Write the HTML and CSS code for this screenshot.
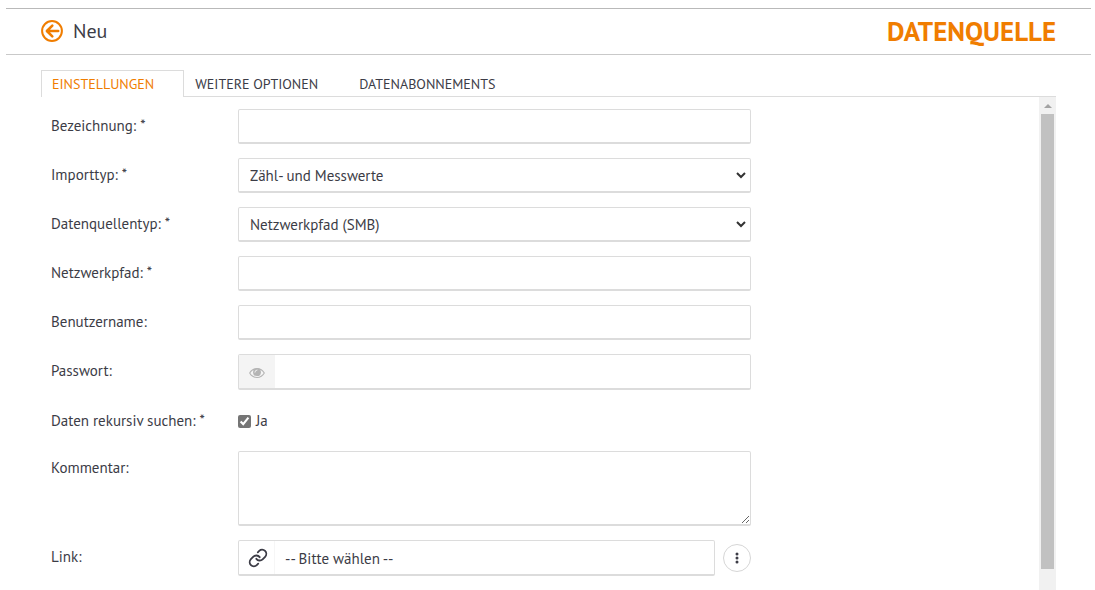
FILE: index.html
```html
<!DOCTYPE html>
<html lang="de">
<head>
  <meta charset="UTF-8">
  <meta name="viewport" content="width=device-width, initial-scale=1.0">
  <title>Datenquelle</title>
  <link rel="stylesheet" href="styles.css">
</head>
<body>
  <header class="header">
    <a class="back" href="#" aria-label="Zurück">
      <svg width="22" height="22" viewBox="0 0 22 22" fill="none" stroke="currentColor">
        <circle cx="11" cy="11" r="9.9" stroke-width="2"/>
        <path d="M17.2 11H6.5M11.3 5.6L5.9 11l5.4 5.4" stroke-width="2.6" stroke-linecap="round" stroke-linejoin="round"/>
      </svg>
    </a>
    <span class="subtitle">Neu</span>
    <h1>DATENQUELLE</h1>
  </header>

  <main class="content">
    <nav class="tabs">
      <a class="tab active" href="#">EINSTELLUNGEN</a>
      <a class="tab" href="#">WEITERE OPTIONEN</a>
      <a class="tab" href="#">DATENABONNEMENTS</a>
    </nav>

    <div class="panel">
      <form class="form">
        <div class="row">
          <label for="name">Bezeichnung: *</label>
          <input class="field" type="text" id="name">
        </div>
        <div class="row">
          <label for="import_type">Importtyp: *</label>
          <select class="field arrow" id="import_type">
            <option>Zähl- und Messwerte</option>
          </select>
        </div>
        <div class="row">
          <label for="source_type">Datenquellentyp: *</label>
          <select class="field arrow" id="source_type">
            <option>Netzwerkpfad (SMB)</option>
          </select>
        </div>
        <div class="row">
          <label for="path">Netzwerkpfad: *</label>
          <input class="field" type="text" id="path">
        </div>
        <div class="row">
          <label for="user">Benutzername:</label>
          <input class="field" type="text" id="user">
        </div>
        <div class="row">
          <label for="password">Passwort:</label>
          <div class="group">
            <button class="addon eye" type="button" aria-label="Passwort anzeigen">
              <svg width="16" height="12" viewBox="0 0 16 12">
                <path d="M.7 6C4 .1 12 .1 15.3 6 12 11.900 4 11.900.7 6z" fill="none" stroke="currentColor" stroke-width="1.100"/>
                <circle cx="8" cy="5.200" r="3.900" fill="currentColor"/>
                <path d="M5.900 5.200A2.200 2.200 0 0 1 8 3" fill="none" stroke="#f4f4f4" stroke-width=".9" stroke-linecap="round"/>
              </svg>
            </button>
            <input type="password" id="password">
          </div>
        </div>
        <div class="row row-check">
          <span class="label">Daten rekursiv suchen: *</span>
          <label class="check"><input type="checkbox" checked>Ja</label>
        </div>
        <div class="row">
          <label for="comment">Kommentar:</label>
          <textarea class="field" id="comment"></textarea>
        </div>
        <div class="row">
          <label for="link">Link:</label>
          <div class="link-field">
            <div class="group">
              <span class="addon link-icon">
                <svg width="20" height="20" viewBox="0 0 24 24" fill="none" stroke="currentColor" stroke-width="2.200" stroke-linecap="round" stroke-linejoin="round">
                  <path d="M10 13a5 5 0 0 0 7.540.540l3-3a5 5 0 0 0-7.070-7.070l-1.720 1.710"/>
                  <path d="M14 11a5 5 0 0 0-7.540-.540l-3 3a5 5 0 0 0 7.070 7.070l1.710-1.710"/>
                </svg>
              </span>
              <select id="link">
                <option>-- Bitte wählen --</option>
              </select>
            </div>
            <button class="more" type="button" aria-label="Mehr">
              <svg width="4" height="12" viewBox="0 0 4 12" fill="currentColor">
                <circle cx="2" cy="2" r="1.500"/>
                <circle cx="2" cy="6" r="1.500"/>
                <circle cx="2" cy="10" r="1.500"/>
              </svg>
            </button>
          </div>
        </div>
      </form>

      <div class="scrollbar" aria-hidden="true">
        <span class="scroll-up"></span>
        <span class="thumb"></span>
      </div>
    </div>
  </main>
</body>
</html>
```

FILE: styles.css
```css
* {
  box-sizing: border-box;
}
body {
  display: flex;
  flex-direction: column;
  height: 100vh;
  margin: 0;
  padding: 8px 4px 0 6px;
  overflow: hidden;
  background: #fff;
  color: #3c3c46;
  font-family: 'PT Sans', 'Noto Sans', sans-serif;
  font-size: 15px;
  line-height: 20px;
}
a {
  color: inherit;
  text-decoration: none;
}
button {
  padding: 0;
  color: inherit;
  cursor: pointer;
}

/* header */
.header {
  display: flex;
  align-items: center;
  flex: none;
  height: 47px;
  padding: 0 35px 2px;
  border-top: 1px solid #b9b9b9;
  border-bottom: 1px solid #c9c9c9;
}
.back {
  display: flex;
  color: #f07d00;
}
.subtitle {
  margin-left: 10px;
  font-size: 20px;
}
h1 {
  margin: 0 0 0 auto;
  color: #f07d00;
  font-size: 27px;
  font-weight: 700;
}

/* tabs */
.content {
  display: flex;
  flex: 1;
  flex-direction: column;
  min-height: 0;
  padding: 15px 35px 0;
}
.tabs {
  display: flex;
  flex: none;
  border-bottom: 1px solid #dcdcdc;
}
.tab {
  height: 26px;
  padding: 5px 30px 0 11px;
  font-size: 14px;
  line-height: 18px;
}
.tab.active {
  height: 27px;
  margin-bottom: -1px;
  padding: 4px 29px 0 10px;
  border: 1px solid #dcdcdc;
  border-bottom: none;
  background: #fff;
  color: #f07d00;
}

/* form */
.panel {
  display: flex;
  flex: 1;
  min-height: 0;
}
.form {
  display: flex;
  flex: 1;
  flex-direction: column;
  gap: 14px;
  padding: 12px 10px 0;
  overflow: hidden;
}
.row {
  display: grid;
  flex: none;
  grid-template-columns: 187px minmax(0, 513px);
  align-items: start;
}
.row > label,
.row > .label {
  padding-top: 7px;
}
.row-check {
  height: 33px;
}
.row > .check {
  display: flex;
  align-items: center;
  gap: 5px;
}
.check input {
  width: 13px;
  height: 13px;
  margin: 0;
  accent-color: #757575;
}
.field,
.group {
  width: 100%;
  height: 35px;
  border: 1px solid #dcdcdc;
  border-bottom-width: 2px;
  border-radius: 2px;
  background: #fff;
}
input,
select,
textarea {
  color: inherit;
  font: inherit;
  outline: none;
}
.field {
  padding: 2px 11px 0;
}
select {
  appearance: none;
}
.arrow {
  background: #fff url("data:image/svg+xml,%3Csvg xmlns='http://www.w3.org/2000/svg' width='10' height='7' fill='none' stroke='%23333' stroke-width='2'%3E%3Cpath d='M1 1l4 4 4-4'/%3E%3C/svg%3E") no-repeat right 4px center;
}
textarea.field {
  display: block;
  height: 75px;
  padding: 8px 11px;
  resize: vertical;
}
.group {
  display: flex;
  height: 36px;
}
.group input,
.group select {
  flex: 1;
  min-width: 0;
  padding: 2px 10px 0;
  border: none;
  background: none;
}
.addon {
  display: flex;
  align-items: center;
  justify-content: center;
  flex: none;
  width: 36px;
  border: none;
}
.eye {
  padding-top: 2px;
  background: #f4f4f4;
  color: #b4b4b4;
}
.link-icon {
  padding-left: 2px;
  border-right: 1px solid #f6f6f6;
}
.link-field {
  display: flex;
  align-items: center;
  gap: 8px;
}
.more {
  display: flex;
  align-items: center;
  justify-content: center;
  flex: none;
  width: 28px;
  height: 28px;
  border: 1px solid #d6d6d6;
  border-radius: 50%;
  background: #fff;
}

/* scrollbar */
.scrollbar {
  display: flex;
  flex: none;
  flex-direction: column;
  width: 17px;
  padding: 0 2px 21px;
  background: #f1f1f1;
}
.scroll-up {
  height: 17px;
  padding: 7px 3px 0;
}
.scroll-up::before {
  content: "";
  display: block;
  border: 4px solid transparent;
  border-top: none;
  border-bottom-color: #a3a3a3;
}
.thumb {
  flex: 1;
  background: #c1c1c1;
}
```
